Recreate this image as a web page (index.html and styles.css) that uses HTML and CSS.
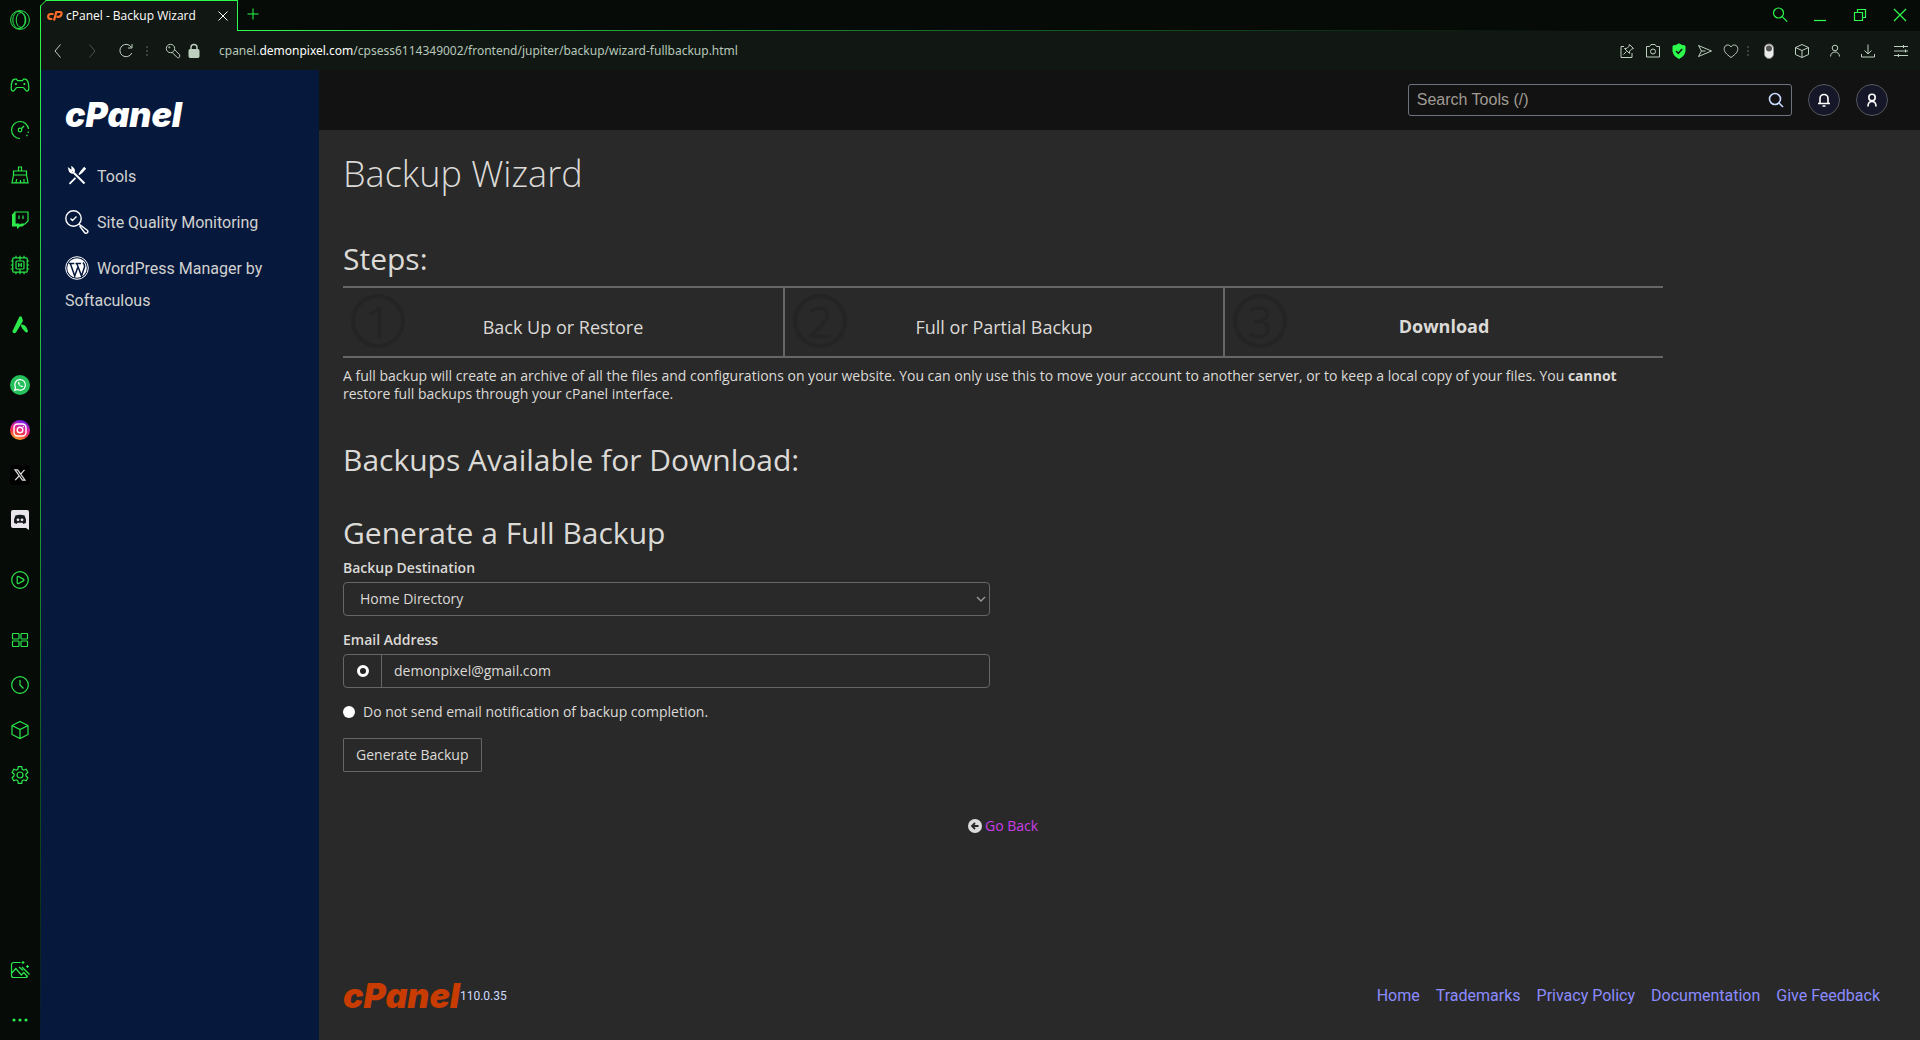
FILE: index.html
```html
<!DOCTYPE html>
<html lang="en">
<head>
<meta charset="utf-8">
<title>cPanel - Backup Wizard</title>
<link rel="stylesheet" href="styles.css">
</head>
<body>
<aside class="dock" aria-label="Browser sidebar">
  <button class="dock-btn dock-home" aria-label="Opera"><svg viewBox="0 0 20 20" stroke-width="1"><circle cx="10" cy="10" r="9.400"/><ellipse cx="11" cy="10" rx="4.800" ry="7.400"/><ellipse cx="9" cy="10" rx="6.200" ry="8.600"/></svg></button>
  <div class="dock-group">
    <button class="dock-btn" aria-label="Games"><svg viewBox="0 0 20 20"><path d="M6.500 4.200H4.800C2 4.200 1.200 9.500 1.200 13c0 2 .6 3.200 1.900 3.200 1.700 0 2.200-3.700 4-3.700h5.800c1.800 0 2.300 3.700 4 3.700 1.300 0 1.900-1.200 1.900-3.200 0-3.500-.8-8.800-3.600-8.800h-1.700l-1 1.500h-5z"/><path d="M4.800 9h2.200M5.900 7.900v2.200M13.300 9h2.200M14.400 7.900v2.200"/></svg></button>
    <button class="dock-btn" aria-label="GX Control"><svg viewBox="0 0 20 20"><path d="M10 18.500A8.500 8.500 0 1 1 18.500 9"/><path d="M18.400 11.500l-.3 1.500M17.300 14.800l-.8 1.300"/><circle cx="10" cy="10" r="1.800"/><path d="M11.500 8.500L14 6"/></svg></button>
    <button class="dock-btn" aria-label="GX Cleaner"><svg viewBox="0 0 20 20"><path d="M8.500 6V2h3v4M3.500 6h13v4h-13zM3.500 10L2 17.800h16L16.500 10M6 17.500l.7-3.500M10.500 17.500V15M14 17.500V14"/></svg></button>
    <button class="dock-btn" aria-label="Twitch"><svg viewBox="0 0 20 20"><path class="solid" d="M2 4.500L5 1.500V14h4v2l2.500-2H15l3-3-5.500 5.500H10L7 19v-2.500H2z"/><path d="M5 2h13v9l-3 3h-3.500L9 16v-2H5zM9 5.500V9M13 5.500V9"/></svg></button>
    <button class="dock-btn" aria-label="CPU"><svg viewBox="0 0 20 20"><rect x="2.800" y="2.800" width="14.400" height="14.400" rx="1"/><rect x="6" y="6" width="8" height="8" rx="1"/><path d="M8.700 8v4M11.300 8v4M8.700 10h2.600M6 .8v2M10 .8v5M14 .8v2M6 17v2.200M10 14v5.200M14 17v2.200M.8 6h2M.8 10h2M.8 14h2M17 6h2.200M17 10h2.200M17 14h2.200"/></svg></button>
  </div>
  <div class="dock-group">
    <button class="dock-btn" aria-label="Aria"><svg viewBox="0 0 20 20"><path class="solid" d="M9.500 1.500Q11 .5 12 2.500l1 3.500L6 17.500c-1.500 1.500-4 .3-3.500-1.500zM11 9.500c4-.5 6 3 7 6.500-1 2.500-2.500 1.500-4-.5-1.200-1.500-3-2.500-3-6z"/></svg></button>
  </div>
  <div class="dock-group">
    <button class="dock-btn" aria-label="WhatsApp"><svg class="app" viewBox="0 0 20 20"><circle cx="10" cy="10" r="10" fill="#25c05c"/><path d="M4.600 15.400l.9-2.900a5.300 5.300 0 1 1 2 2z" fill="none" stroke="#fff" stroke-width="1.200"/><path d="M8 7.200c-.6 1.700 2.200 5 4.300 4.900.8-.2.900-.9.500-1.200l-1-.5-.7.600c-.7-.3-1.400-1-1.700-1.700l.5-.7-.5-1.200c-.5-.7-1.200-.6-1.400-.2z" fill="#fff"/></svg></button>
    <button class="dock-btn" aria-label="Instagram"><svg class="app" viewBox="0 0 20 20"><defs><linearGradient id="ig" x1=".2" y1="1" x2=".6" y2="0"><stop offset="0" stop-color="#ffc52e"/><stop offset=".35" stop-color="#f5373d"/><stop offset=".65" stop-color="#e0209f"/><stop offset="1" stop-color="#6b1cf0"/></linearGradient></defs><circle cx="10" cy="10" r="10" fill="url(#ig)"/><g fill="none" stroke="#fff" stroke-width="1.400"><rect x="4" y="4" width="12" height="12" rx="3.500"/><circle cx="10" cy="10" r="2.800"/></g><circle cx="13.400" cy="6.600" r=".8" fill="#fff"/></svg></button>
    <button class="dock-btn" aria-label="X"><svg class="app" viewBox="0 0 20 20"><rect width="20" height="20" rx="4" fill="#000"/><path d="M5 4.800h2.600l7.400 10.400h-2.600zM14.500 4.800l-4 4.500M9 11l-3.800 4.200" fill="none" stroke="#ddd"/></svg></button>
    <button class="dock-btn" aria-label="Discord"><svg class="app" viewBox="0 0 20 20"><path d="M3 0h14a2 2 0 0 1 2 2v18l-3-2H3a2 2 0 0 1-2-2V2a2 2 0 0 1 2-2z" fill="#e9e5ea"/><path d="M5.500 5.500Q10 4 14.500 5.500 16.500 9 16 12.800L13.500 14l-1-1.200h-5l-1 1.200L4 12.800Q3.500 9 5.500 5.500z" fill="#15171a"/><circle cx="8" cy="9.800" r="1.400" fill="#e9e5ea"/><circle cx="12" cy="9.800" r="1.400" fill="#e9e5ea"/></svg></button>
  </div>
  <div class="dock-group">
    <button class="dock-btn" aria-label="Player"><svg viewBox="0 0 20 20"><circle cx="10" cy="10" r="8.300"/><path d="M7.200 7.200c0-.8.500-1 1.200-.7l5 2.600c.8.500.8 1.300 0 1.800l-5 2.600c-.7.300-1.200.1-1.200-.7z"/></svg></button>
  </div>
  <div class="dock-group">
    <button class="dock-btn" aria-label="Speed Dial"><svg viewBox="0 0 20 20"><rect x="2.500" y="3.500" width="6.500" height="5.500" rx=".8"/><rect x="11" y="3.500" width="6.500" height="5.500" rx=".8"/><rect x="2.500" y="11" width="6.500" height="5.500" rx=".8"/><rect x="11" y="11" width="6.500" height="5.500" rx=".8"/></svg></button>
    <button class="dock-btn" aria-label="History"><svg viewBox="0 0 20 20"><circle cx="10" cy="10" r="8.300"/><path d="M10 5v5l3.500 3.500"/></svg></button>
    <button class="dock-btn" aria-label="Extensions"><svg viewBox="0 0 20 20"><path d="M10 1.500l8 4v9l-8 4-8-4v-9zM2 5.500l8 4 8-4M10 9.500v9"/></svg></button>
    <button class="dock-btn" aria-label="Settings"><svg viewBox="0 0 20 20"><circle cx="10" cy="10" r="3"/><path d="M8.300 1.700h3.400l.5 2.600 1.500.9 2.500-.9 1.700 3-2 1.700v2l2 1.700-1.700 3-2.500-.9-1.500.9-.5 2.600H8.300l-.5-2.600-1.500-.9-2.500.9-1.700-3 2-1.700V9l-2-1.700 1.700-3 2.500.9 1.500-.9z"/></svg></button>
  </div>
  <div class="dock-end">
    <button class="dock-btn" aria-label="Wallpapers"><svg viewBox="0 0 20 20"><path d="M10.500 2.500H3.500a2 2 0 0 0-2 2v11a2 2 0 0 0 2 2h12a2 2 0 0 0 2-2M1.800 13l4-4.500 5.500 6.500 2.500-2.500 3.500 4M9 7l4 3.500M13 1v3M11.500 2.500h3M17.500 5v3M16 6.500h3M12 7l7.500 7.500"/></svg></button>
    <button class="dock-btn" aria-label="More"><svg viewBox="0 0 20 20"><g class="solid"><circle cx="4" cy="10" r="1.600"/><circle cx="10" cy="10" r="1.600"/><circle cx="16" cy="10" r="1.600"/></g></svg></button>
  </div>
</aside>

<div class="window">
  <div class="titlebar">
    <div class="tab">
      <svg class="tab-corner" viewBox="0 0 7 7"><path d="M0 0h6L0 6z" fill="#070b08" stroke="none"/><path d="M0 6.500L6.500 0" stroke="#2dfc4d" fill="none"/></svg>
      <svg class="favicon" viewBox="0 0 16 12"><path d="M6.500 4H4Q1.200 4 1.200 6.500T3.500 9h1.800M7 10.500L9.300 2H13q2 0 1.500 2.300T11.500 6.800H9.500" fill="none" stroke="#ff6c2c" stroke-width="2.200"/></svg>
      <span class="tab-title">cPanel - Backup Wizard</span>
      <button class="tab-close" aria-label="Close tab"><svg viewBox="0 0 10 10"><path d="M.5.5l9 9M9.500.5l-9 9"/></svg></button>
    </div>
    <div class="tab-rest">
      <button class="tab-new" aria-label="New tab"><svg viewBox="0 0 12 12"><path d="M6 .5v11M.5 6h11"/></svg></button>
      <div class="win-controls">
        <button class="win-btn" aria-label="Search tabs"><svg viewBox="0 0 16 16"><circle cx="6.500" cy="6" r="5"/><path d="M10.200 9.700l5 5"/></svg></button>
        <button class="win-btn" aria-label="Minimize"><svg viewBox="0 0 16 16"><path d="M2 13.500h12"/></svg></button>
        <button class="win-btn" aria-label="Restore"><svg viewBox="0 0 16 16"><path d="M2.500 5.500h8v8h-8zM5.500 5V2.500h8v8H11"/></svg></button>
        <button class="win-btn" aria-label="Close"><svg viewBox="0 0 16 16"><path d="M2 2l12 12M14 2L2 14"/></svg></button>
      </div>
    </div>
  </div>

  <div class="toolbar">
    <button class="nav-btn" aria-label="Back"><svg viewBox="0 0 16 16"><path d="M10.500 1.500L5 8l5.500 6.500"/></svg></button>
    <button class="nav-btn dim" aria-label="Forward"><svg viewBox="0 0 16 16"><path d="M5.500 1.500L11 8l-5.500 6.500"/></svg></button>
    <button class="nav-btn" aria-label="Reload"><svg viewBox="0 0 16 16"><path d="M13.500 4.500A6.200 6.200 0 1 0 13.800 10M14 1v4h-4"/></svg></button>
    <span class="grip"></span>
    <div class="site-info">
      <button class="site-btn" aria-label="Password"><svg viewBox="0 0 16 16"><circle cx="5.500" cy="5.500" r="4.200"/><circle cx="4.300" cy="4.300" r=".6"/><path d="M7.200 9.500l5 5c1.200.8 2.500.2 2.500-1.200v-1.500l-5-5"/></svg></button>
      <button class="site-btn" aria-label="Site security"><svg viewBox="0 0 16 16"><rect class="fill" x="3" y="6.500" width="10" height="8" rx="1"/><path d="M5 7V4.500a3 3 0 0 1 6 0V7" stroke-width="1.400"/></svg></button>
    </div>
    <div class="address" role="textbox" aria-label="Address" contenteditable="true" spellcheck="false">cpanel.<b>demonpixel.com</b>/cpsess6114349002/frontend/jupiter/backup/wizard-fullbackup.html</div>
    <div class="page-actions">
      <button class="act-btn" aria-label="Pin"><svg viewBox="0 0 16 16"><path d="M5 3.500H2v11h11V10M10.500 1.500l4 4-2 .7-1.800 1.800-.2 2.500-5-5 2.500-.2L9.800 3.500zM7.500 8.500L4.500 11.500"/></svg></button>
      <button class="act-btn" aria-label="Snapshot"><svg viewBox="0 0 16 16"><path d="M1.500 3.500h3l1.500-2h4l1.500 2h3v10.500h-13z"/><circle cx="8" cy="8.500" r="2.500"/></svg></button>
      <button class="act-btn" aria-label="Ad blocker"><svg viewBox="0 0 16 16"><path d="M8 .8Q10.500 2.600 14 3v5.500Q13.500 13 8 15.500 2.500 13 2 8.500V3Q5.500 2.600 8 .8z" fill="#2dfc4d" stroke="#2dfc4d"/><path d="M5 8l2.300 2.300L11.200 6" stroke="#111712" stroke-width="1.600"/></svg></button>
      <button class="act-btn" aria-label="Send to My Flow"><svg viewBox="0 0 16 16"><path d="M1.500 2.500l13 5.500-13 5.500L4.500 8zM4.500 8h4"/></svg></button>
      <button class="act-btn" aria-label="Bookmark"><svg viewBox="0 0 16 16"><path d="M8 14.500C3 11 1 8.500 1.200 5.500 1.500 1.500 6.500.8 8 4c1.500-3.200 6.500-2.500 6.800 1.500C15 8.500 13 11 8 14.500z"/></svg></button>
    </div>
    <span class="grip"></span>
    <div class="ext-actions">
      <button class="ext-btn" aria-label="Dark mode"><svg viewBox="0 0 16 16"><rect x="3.500" y="1" width="9" height="14.500" rx="4.500" fill="#ececec" stroke="#888"/><circle cx="8" cy="5.500" r="3" fill="#555" stroke="none"/></svg></button>
      <button class="ext-btn" aria-label="Extensions"><svg viewBox="0 0 16 16"><path d="M8 1.500l6.500 3v7L8 14.500l-6.500-3v-7zM1.500 4.500L8 7.500l6.500-3M8 7.500v7"/></svg></button>
      <button class="ext-btn" aria-label="Account"><svg viewBox="0 0 16 16"><circle cx="8" cy="5" r="2.800"/><path d="M3.500 13.500c0-6 9-6 9 0"/></svg></button>
      <button class="ext-btn" aria-label="Downloads"><svg viewBox="0 0 16 16"><path d="M8 1.500v9M4.500 7.500L8 11l3.500-3.500M1.500 11v3h13v-3"/></svg></button>
      <button class="ext-btn" aria-label="Easy setup"><svg viewBox="0 0 16 16"><path d="M1 3.500h14M1 8h14M1 12.500h14M10.500 2v3M12.500 6.500v3M5.500 11v3"/></svg></button>
    </div>
  </div>

  <div class="page">
    <nav class="side">
      <a class="brand" href="#">cPanel</a>
      <a class="side-link" href="#"><svg viewBox="0 0 24 24"><path d="M9 9l10.500 10.500" stroke-width="2"/><path d="M4.200 5.200q.8 3.800 4 3.600 2.200-2.500-.9-5l.2 2.500-1.300.5zM4.500 19.800l6-6" stroke-width="1.800"/><path d="M14 10.500l1.700-2.700 3.500-4 1 1-3.700 4z" fill="#fff"/></svg>Tools</a>
      <a class="side-link" href="#"><svg viewBox="0 0 24 24"><circle cx="8.500" cy="8.500" r="7.700"/><path d="M5.500 8.500l2 2 4-4M14 14l2 2M16 15.500l6.500 5q1 1.500-.5 2.500-1.500.8-2.500-.5l-4.500-6z"/></svg>Site Quality Monitoring</a>
      <a class="side-link" href="#"><svg viewBox="0 0 24 24"><circle cx="12" cy="12" r="11.300" stroke-width="1"/><circle cx="12" cy="12" r="9.800" fill="#fff" stroke="none"/><path d="M3.800 7.500h5.500M10.500 7.500h5.500M5.500 8l4.200 12 3-8.500M12 8l4.500 12L19.500 11Q20 9 18 6.500" stroke="#06183c" stroke-width="1.500"/></svg>WordPress Manager by Softaculous</a>
    </nav>

    <div class="content">
      <header class="topbar">
        <form class="search">
          <input type="search" aria-label="Search Tools" placeholder="Search Tools (/)">
          <button type="button" aria-label="Search"><svg viewBox="0 0 16 16"><circle cx="7" cy="7" r="5.500"/><path d="M11 11l4 4"/></svg></button>
        </form>
        <button class="round" aria-label="Notifications"><svg viewBox="0 0 16 16"><path d="M4 11V6.500a4 4 0 0 1 8 0V11M2 11.500h12M6.500 14h3"/></svg></button>
        <button class="round" aria-label="User"><svg viewBox="0 0 16 16"><circle cx="8" cy="5.500" r="3.200"/><path d="M4 14.500c0-3 1.500-5 4-5s4 2 4 5"/></svg></button>
      </header>

      <main class="main">
        <h1>Backup Wizard</h1>
        <div class="body">
          <h2>Steps:</h2>
          <ol class="steps">
            <li><span class="num">1</span>Back Up or Restore</li>
            <li><span class="num">2</span>Full or Partial Backup</li>
            <li class="current"><span class="num">3</span>Download</li>
          </ol>
          <p class="intro">A full backup will create an archive of all the files and configurations on your website. You can only use this to move your account to another server, or to keep a local copy of your files. You <strong>cannot</strong> restore full backups through your cPanel interface.</p>
          <h2 class="available">Backups Available for Download:</h2>
          <h2 class="generate">Generate a Full Backup</h2>
          <form class="form">
            <label class="label" for="dest">Backup Destination</label>
            <div class="select-wrap">
              <select id="dest"><option>Home Directory</option></select>
              <svg viewBox="0 0 10 6"><path d="M1 1l4 4 4-4"/></svg>
            </div>
            <label class="label" for="email">Email Address</label>
            <div class="input-group">
              <span class="addon"><input type="radio" name="notify" aria-label="Send email notification" checked></span>
              <input id="email" type="text" value="demonpixel@gmail.com">
            </div>
            <label class="no-mail"><input type="radio" name="notify">Do not send email notification of backup completion.</label>
            <button type="button" class="submit">Generate Backup</button>
          </form>
          <div class="back">
            <svg viewBox="0 0 14 14"><circle cx="7" cy="7" r="7" fill="#ddd"/><path d="M10.500 7H4M7 4L4 7l3 3" fill="none" stroke="#292929" stroke-width="1.800"/></svg>
            <a href="#">Go Back</a>
          </div>
        </div>
      </main>

      <footer class="footer">
        <a class="brand brand-orange" href="#">cPanel</a><span class="version">110.0.35</span>
        <nav class="foot-links">
          <a href="#">Home</a><a href="#">Trademarks</a><a href="#">Privacy Policy</a><a href="#">Documentation</a><a href="#">Give Feedback</a>
        </nav>
      </footer>
    </div>
  </div>
</div>
</body>
</html>
```

FILE: styles.css
```css
*, *::before, *::after { box-sizing: border-box; }

:root {
  --green: #2dfc4d;
  --chrome: #070b08;
  --toolbar: #111712;
  --navy: #06183c;
  --bg: #292929;
  --line: #666;
  --text: #dcdad7;
}

body {
  margin: 0;
  display: flex;
  min-height: 100vh;
  background: var(--chrome);
  color: var(--text);
  font: 14px/18px "Open Sans", "Noto Sans", sans-serif;
}

button {
  display: flex;
  align-items: center;
  justify-content: center;
  padding: 0;
  border: 0;
  background: none;
  color: inherit;
  font: inherit;
}

svg { display: block; fill: none; stroke: currentColor; }
a { text-decoration: none; }

/* Browser sidebar */
.dock {
  flex: none;
  display: flex;
  flex-direction: column;
  width: 40px;
  color: #2be84b;
}
.dock-btn { width: 39px; height: 45px; }
.dock-btn svg { width: 20px; height: 20px; stroke-width: 1.2; }
.dock-btn .app { stroke: none; }
.dock-home { height: 40px; margin-bottom: 7px; }
.dock-home svg { stroke-width: 1; }
.dock-group { margin-top: 15px; }
.dock-end { margin-top: auto; display: grid; gap: 10px; }
.dock-end .dock-btn { height: 40px; }
.solid { fill: currentColor; stroke: none; }

/* Browser window */
.window {
  flex: 1;
  min-width: 0;
  display: flex;
  flex-direction: column;
  padding-left: 1px;
  background: linear-gradient(var(--green), #1e9a32 50%, #0b2a14 90%, var(--navy));
}

.titlebar { display: flex; height: 31px; }
.tab {
  position: relative;
  display: flex;
  align-items: center;
  width: 198px;
  margin-left: -1px;
  padding: 0 9px 0 6px;
  border: 1px solid var(--green);
  border-bottom: 0;
  background: var(--toolbar);
  color: #fff;
  font-size: 12px;
}
.tab-corner { position: absolute; left: -1px; top: -1px; width: 7px; height: 7px; }
.favicon { width: 16px; height: 12px; stroke: none; margin-right: 3px; }
.tab-title { flex: 1; white-space: nowrap; }
.tab-close svg { width: 10px; height: 10px; }
.tab-rest {
  flex: 1;
  display: flex;
  justify-content: space-between;
  background: linear-gradient(90deg, var(--green), #1b8a2f 30%, var(--chrome) 80%) bottom / 100% 1px no-repeat, var(--chrome);
  color: var(--green);
}
.tab-new { width: 29px; height: 28px; }
.tab-new svg { width: 12px; height: 12px; }
.win-controls { display: flex; }
.win-btn { width: 40px; height: 30px; }
.win-btn svg { width: 16px; height: 16px; stroke-width: 1.2; }

.toolbar {
  display: flex;
  align-items: center;
  height: 39px;
  padding-right: 3px;
  background: var(--toolbar);
  color: #bdd0c0;
}
.toolbar svg { width: 16px; height: 16px; }
.nav-btn { width: 34px; height: 32px; }
.dim { color: #4b564d; }
.grip { flex: none; width: 8px; height: 12px; background: radial-gradient(circle, #39433b 1px, transparent 1px) center / 8px 4px; }
.site-info { display: flex; padding: 0 15px 0 11px; }
.site-btn { width: 21px; height: 32px; }
.fill { fill: currentColor; }
.address { flex: 1; min-width: 0; overflow: hidden; white-space: nowrap; font: 12px/18px "Noto Sans", sans-serif; color: #b7c7ba; }
.address b { font-weight: 400; color: #fff; }
.page-actions, .ext-actions { display: flex; }
.act-btn { width: 26px; height: 32px; }
.ext-btn { width: 33px; height: 32px; }

/* cPanel */
.page { flex: 1; display: flex; background: var(--bg); }
.brand {
  display: block;
  color: #fff;
  font: italic 900 34px/32px Inter, "Open Sans", sans-serif;
}
.side {
  flex: none;
  display: flex;
  flex-direction: column;
  gap: 14px;
  width: 278px;
  padding: 29px 24px;
  background: var(--navy);
}
.side .brand { margin-bottom: 16px; }
.side-link { color: #d2d2cf; font: 16px/32px Roboto, sans-serif; }
.side-link svg { display: inline-block; width: 24px; height: 24px; margin-right: 8px; vertical-align: -6px; color: #fff; stroke-width: 1.4; }

.content { flex: 1; min-width: 0; display: flex; flex-direction: column; }
.topbar {
  display: flex;
  align-items: center;
  justify-content: flex-end;
  gap: 16px;
  height: 60px;
  padding: 0 32px;
  background: #121212;
}
.search {
  display: flex;
  width: 25%;
  height: 32px;
  border: 1px solid #6d7380;
  border-radius: 3px;
}
.search input {
  flex: 1;
  min-width: 0;
  padding: 0 8px;
  border: 0;
  background: none;
  color: #ccc;
  font: 16px "Liberation Sans", Arial, sans-serif;
}
.search input::placeholder { color: #a09b92; }
.search button { width: 30px; color: #c9dcff; }
.search svg { width: 16px; height: 16px; stroke-width: 1.6; }
.round { width: 32px; height: 32px; border: 1px solid #55565c; border-radius: 50%; background: #151628; color: #fff; }
.round svg { width: 16px; height: 16px; stroke-width: 1.6; }

.main { padding: 24px; }
h1 { margin: 0; font-size: 36px; line-height: 40px; font-weight: 300; }
h2 { margin: 0; font-size: 30px; line-height: 34px; font-weight: 400; }
.body { width: 85%; padding-top: 48px; }

.steps {
  display: grid;
  grid-template-columns: repeat(3, 1fr);
  margin: 10px 0 9px;
  padding: 0;
  list-style: none;
  border: solid var(--line);
  border-width: 2px 0;
}
.steps li {
  position: relative;
  padding: 28px 0 18px;
  font-size: 18px;
  line-height: 22px;
  text-align: center;
}
.steps li + li { border-left: 2px solid var(--line); }
.steps .current { padding: 27px 0 19px; font-weight: 700; }
.num {
  position: absolute;
  left: 8px;
  top: 6px;
  width: 54px;
  height: 54px;
  border: 4px solid #242424;
  border-radius: 50%;
  color: #242424;
  font-size: 44px;
  font-weight: 400;
  line-height: 46px;
}
.intro { margin: 0; }
.available { margin-top: 40px; }
.generate { margin-top: 39px; }

.form { width: 49%; margin-top: 8px; }
.label { display: block; margin-bottom: 4px; line-height: 20px; font-weight: 600; }
.select-wrap { position: relative; margin-bottom: 14px; }
.select-wrap select {
  display: block;
  width: 100%;
  height: 34px;
  padding: 0 16px;
  appearance: none;
  border: 1px solid var(--line);
  border-radius: 4px;
  background: none;
  color: inherit;
  font: inherit;
}
.select-wrap svg { position: absolute; right: 4px; top: 14px; width: 10px; height: 6px; color: #999; stroke-width: 1.4; }
.input-group { display: flex; height: 34px; border: 1px solid var(--line); border-radius: 4px; }
.addon { display: flex; align-items: center; justify-content: center; width: 38px; border-right: 1px solid var(--line); }
.input-group input[type="text"] {
  flex: 1;
  min-width: 0;
  padding: 0 12px;
  border: 0;
  background: none;
  color: inherit;
  font: inherit;
}
input[type="radio"] {
  width: 12px;
  height: 12px;
  margin: 0;
  appearance: none;
  border-radius: 50%;
  background: #fff;
}
input[type="radio"]:checked { border: 3px solid #fff; background: #222; }
.no-mail { display: flex; align-items: center; gap: 8px; margin: 14px 0 16px; line-height: 20px; }
.submit { height: 34px; padding: 0 12px; border: 1px solid var(--line); border-radius: 1px; }

.back { display: flex; align-items: center; justify-content: center; gap: 3px; margin-top: 44px; line-height: 20px; }
.back svg { width: 14px; height: 14px; stroke: none; }
.back a { color: #cb3ce8; }

.footer { display: flex; align-items: center; margin-top: auto; padding: 0 40px 28px 24px; }
.brand-orange { color: #c83c02; }
.version { color: #cfdcff; font: 12px/16px Roboto, sans-serif; }
.foot-links { display: flex; gap: 16px; margin-left: auto; font: 16px/20px Roboto, sans-serif; }
.foot-links a { color: #8c8cff; }
```
